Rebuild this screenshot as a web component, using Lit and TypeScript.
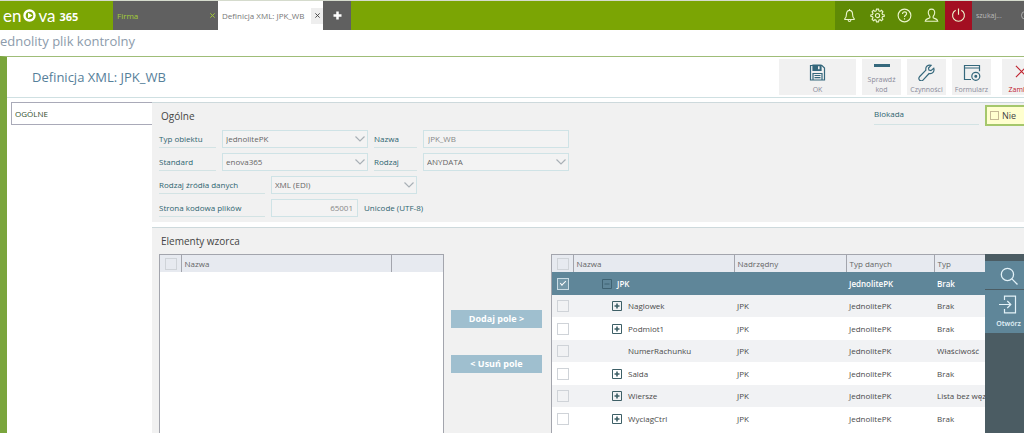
import { LitElement, html, css, svg, nothing } from "lit";
import { customElement } from "lit/decorators.js";
import { classMap } from "lit/directives/class-map.js";

interface Item {
  name: string;
  parent: string;
  data: string;
  type: string;
  mark: "" | "plus" | "minus";
}

const ITEMS: Item[] = [
  { name: "JPK", parent: "", data: "JednolitePK", type: "Brak", mark: "minus" },
  { name: "Naglowek", parent: "JPK", data: "JednolitePK", type: "Brak", mark: "plus" },
  { name: "Podmiot1", parent: "JPK", data: "JednolitePK", type: "Brak", mark: "plus" },
  { name: "NumerRachunku", parent: "JPK", data: "JednolitePK", type: "Właściwość", mark: "" },
  { name: "Salda", parent: "JPK", data: "JednolitePK", type: "Brak", mark: "plus" },
  { name: "Wiersze", parent: "JPK", data: "JednolitePK", type: "Lista bez węzła", mark: "plus" },
  { name: "WyciagCtrl", parent: "JPK", data: "JednolitePK", type: "Brak", mark: "plus" },
];

const icon = (cls: string, box: string, body: unknown) =>
  html`<svg class="icon ${cls}" viewBox=${box} aria-hidden="true">${body}</svg>`;

const bell = svg`<path d="M3 11.5c1.3-1 1.7-2.300 1.700-4.500 0-2.800 1.100-4.500 3.300-4.500s3.300 1.700 3.300 4.500c0 2.200.4 3.500 1.700 4.500v.8H3zM6.500 12.500c0 2.500 3 2.500 3 0M8 2.500V1"/>`;
const gear = svg`<path d="M6.900 1.200h2.200l.4 1.900 1.200.5 1.600-1.100 1.500 1.600-1 1.600.5 1.200 1.900.4v1.500l-1.900.4-.5 1.200 1 1.600-1.500 1.600-1.600-1.100-1.200.5-.4 1.800H6.900l-.4-1.800-1.200-.5-1.600 1.100L2.200 12l1-1.600-.5-1.200L.9 8.800V7.300l1.800-.4.5-1.200-1-1.600 1.500-1.600 1.600 1.100 1.200-.5z"/><circle cx="8" cy="8" r="2.200"/>`;
const help = svg`<circle cx="8" cy="8" r="6.800"/><path d="M5.900 6.300c0-2.900 4.300-2.700 4.300-.2 0 1.600-2.200 1.600-2.200 3.500M8 10.900v1.300"/>`;
const user = svg`<path d="M8 1.200c2.600 0 3.600 1.800 3.400 4.200-.2 1.800-.9 2.700-1.600 3.500v1.600c1 .8 4.500.8 4.900 3.600H1.300c.4-2.800 3.900-2.800 4.900-3.600V8.900c-.7-.8-1.400-1.700-1.600-3.500C4.400 3 5.400 1.200 8 1.200z"/>`;
const power = svg`<path d="M5 2.300a6.300 6.300 0 1 0 6 0M8 .6v6.600"/>`;
const lens = svg`<circle cx="8" cy="8" r="5.800"/><path d="M12.200 12.200L17.500 17.500"/>`;
const save = svg`<path d="M1.500 1.500h11.500l2.500 2.500v12h-14z"/><path class="fill" d="M4 1h8v5.500H4z"/><path class="gap" d="M9 2.200h1.600v3H9z"/><path d="M4 16V9.500h9V16M5.500 11.500h6M5.500 13.700h6"/>`;
const wrench = svg`<path d="M15.800 4.300l-2.900 2.300-2-.6-.4-2 2.600-2.700c-3-.9-6 1.300-5.200 4.800L1.700 12.500c-1.400 1.500-.9 3 0 3.700.9.800 2.400.8 3.500-.4l5.900-6.300c3.400.7 5.600-2 4.700-5.200zM3.600 14.200h.1"/>`;
const form = svg`<path d="M8 15.500H1.500v-14h15v5.700M1.500 4h15"/><circle cx="12.800" cy="12.300" r="4"/><circle class="fill" cx="12.800" cy="12.300" r=".9"/>`;
const close = svg`<path d="M1 1l12 12M13 1L1 13"/>`;
const enter = svg`<path d="M5.500 5V1.200h11v16.600h-11V14M0 9.500h11.500M8.300 6l3.500 3.500L8.300 13"/>`;

@customElement("app-root")
export class AppRoot extends LitElement {
  static styles = css`
    :host {
      display: flex;
      flex-direction: column;
      min-height: 100vh;
      overflow: hidden;
      background: #fff;
      color: #555;
      font: 8px/12px "Open Sans", "Noto Sans", sans-serif;
    }
    *, *::before, *::after { box-sizing: border-box; }
    button, input, select { font: inherit; color: inherit; border-radius: 0; margin: 0; }
    button { border: 0; padding: 0; background: none; }
    h1, h2, h3 { margin: 0; font-weight: 400; }
    .icon { display: block; fill: none; stroke: currentColor; stroke-width: 1.2; }
    .icon .fill { fill: currentColor; }
    .icon .gap { fill: #f1f1f1; stroke: none; }

    .topbar { display: flex; height: 30px; border-top: 1px solid #d5dbcd; background: #7ba504; }
    .logo { display: flex; align-items: center; width: 113px; padding-left: 3px; color: #fff; text-decoration: none; font: 17px/28px Lato, sans-serif; }
    .logo svg { width: 13px; height: 13px; margin: 0 2px; }
    .logo b { font: 700 11px/28px "Open Sans", sans-serif; margin: 2px 0 0 4px; }
    .tab { display: flex; align-items: center; width: 105px; background: #606060; color: #a4cf35; }
    .tab a { flex: 1; padding-left: 4px; color: inherit; text-decoration: none; white-space: nowrap; }
    .tab button { width: 12px; height: 16px; }
    .tab.active { background: #fff; color: #777; }
    .tab.active button { background: #eee; color: #444; }
    .x { width: 5px; height: 5px; margin: auto; }
    .plus { width: 28px; background: #606060; color: #fff; }
    .plus svg { width: 9px; height: 9px; margin: auto; stroke-width: 2.500; }
    .tools { display: flex; margin-left: auto; background: #5f8a05; color: #eaf5cc; }
    .tools button { width: 27px; }
    .tools button:first-child { width: 29px; }
    .tools .off { background: #a30f22; }
    .tools svg { width: 15px; height: 15px; margin: auto; }
    .search { display: flex; align-items: center; width: 52px; padding-left: 4px; background: #606060; color: #bbb; font-size: 7px; overflow: hidden; }
    .search input { flex: none; width: 44px; border: 0; padding: 0; background: none; }
    .search input::placeholder { color: #bbb; opacity: 1; }
    .search svg { flex: none; width: 12px; height: 12px; }

    .context { height: 26px; font-size: 13px; line-height: 23px; color: #8c9bab; }
    .frame { flex: 1; display: flex; flex-direction: column; border-top: 1px solid #9fbd78; border-left: 7px solid #7aa53c; }
    .head { display: flex; align-items: center; height: 41px; padding-left: 25px; border-bottom: 1px solid #cfe0e2; }
    .head h2 { flex: 1; font-size: 13px; line-height: 18px; color: #56809a; }
    .actions { display: flex; gap: 6px; margin-right: -17px; }
    .actions button { display: flex; flex-direction: column; align-items: center; justify-content: space-between; width: 39px; height: 36px; padding-top: 5px; background: #f1f1f1; color: #8a8a9a; font-size: 7px; line-height: 10px; }
    .actions svg { color: #35687c; }
    .actions .wide { width: 77px; }
    .actions .last { margin-left: 5px; color: #c0202c; }
    .actions .last svg { width: 13px; height: 13px; margin-top: 1px; color: #c0202c; }
    .i17 { width: 17px; height: 17px; }
    .i18 { width: 18px; height: 18px; }
    .bar { width: 16px; height: 3px; background: #35687c; }

    .work { flex: 1; display: flex; padding: 4px 0 0 4px; }
    .side { width: 141px; }
    .side a { display: block; height: 23px; padding-left: 3px; border: 1px solid #a9aab8; border-right: 0; line-height: 21px; color: #34502c; text-decoration: none; }
    .main { flex: 1; min-width: 0; display: flex; flex-direction: column; gap: 5px; }
    .panel { border-top: 1px solid #cdd9dc; background: #f1f1f1; }
    .panel h3 { padding-left: 9px; font-size: 10px; line-height: 16px; color: #444; }
    .general { display: flex; justify-content: space-between; height: 120px; padding: 5px 0 0 7px; }
    .panel .form h3 { padding-left: 2px; margin-bottom: 1px; }
    .form { display: flex; flex-direction: column; gap: 5px; }
    .line { display: flex; gap: 6px; height: 18px; }
    .lab { width: 57px; border-bottom: 1px solid #d3e3e4; color: #2e6470; line-height: 17px; white-space: nowrap; }
    .lab.mid { width: 43px; }
    .lab.long { width: 106px; }
    .unit { color: #2e6470; line-height: 18px; }
    .box { width: 146px; height: 18px; border: 1px solid #cfe3e6; padding: 0 3px; background: #f3f3f3; color: #666; }
    input.box { padding: 0 4px 2px; color: #888; }
    .pick { position: relative; display: flex; }
    .pick select { appearance: none; }
    .pick svg { position: absolute; right: 3px; top: 6px; width: 10px; height: 6px; color: #a9b0b6; pointer-events: none; }
    .box.num { width: 87px; text-align: right; }
    .lock { display: flex; gap: 6px; align-items: flex-start; margin-top: -3px; }
    .lock .lab { width: 105px; height: 20px; line-height: 18px; }
    .check { display: flex; align-items: center; gap: 3px; width: 39px; height: 21px; padding-left: 3px; border: 2px solid #a5c76b; border-right: 0; background: #ffffcf; color: #444; font-size: 9px; }
    .tick { appearance: none; display: block; width: 12px; height: 12px; border: 1px solid #cfd3d8; }
    .check .tick { width: 9px; height: 9px; border-color: #c5b995; }
    .tick.on { display: grid; place-items: center; border-color: #c9dbe4; background: #7397a8; }
    .tick.on::before { content: ""; width: 6px; height: 3px; margin-bottom: 2px; border: solid #fff; border-width: 0 0 1px 1px; transform: rotate(-45deg); }

    .elements { flex: 1; display: flex; flex-direction: column; padding-top: 5px; }
    .lists { flex: 1; display: flex; padding: 5px 0 0 7px; }
    .list { border: 1px solid #a3a5ad; border-bottom: 0; background: #fff; }
    .from { width: 285px; }
    .to { flex: 1; min-width: 0; border-right: 0; }
    table { width: 100%; table-layout: fixed; border-collapse: collapse; }
    th { height: 17px; padding: 0 0 0 3px; background: #e7eaf0; border-left: 1px solid #a3a5ad; font-weight: 400; text-align: left; color: #666; }
    td { padding: 0 0 0 3px; height: 22px; white-space: nowrap; overflow: hidden; color: #4a4a4a; }
    tbody tr:nth-child(odd) td { height: 23px; }
    th:first-child { border-left: 0; padding-left: 5px; }
    td:first-child { padding-left: 5px; }
    tbody tr:nth-child(even) { background: #f1f2f4; }
    tbody tr.sel { background: #5f8699; }
    tbody tr.sel td { color: #fff; font-weight: 600; }
    .c-tick { width: 21px; }
    .c-name { width: 161px; }
    .c-parent { width: 112px; }
    .c-data { width: 88px; }
    .c-from { width: 210px; }
    .node { display: flex; align-items: center; gap: 6px; padding-left: 36px; }
    .sel .node { padding-left: 26px; gap: 5px; }
    .node svg { width: 10px; height: 10px; color: #3d5f66; stroke-width: 1; }
    .sel .node svg { color: #3f6272; }
    .blank { width: 10px; }
    .move { display: flex; flex-direction: column; gap: 27px; width: 107px; padding: 56px 9px 0 7px; }
    .move button { height: 18px; background: #9fbfcf; color: #fff; font-size: 9px; font-weight: 700; line-height: 18px; }
    .rail { display: flex; flex-direction: column; gap: 1px; width: 39px; padding-top: 7px; background: #4b5c63; }
    .rail button { display: flex; flex-direction: column; align-items: center; gap: 5px; padding: 5px 0 0 8px; background: #5f8699; color: #e3f2f8; height: 28px; font-size: 7px; line-height: 10px; font-weight: 600; }
    .rail button.tall { height: 43px; }
    .rail svg { width: 19px; height: 19px; }
  `;

  private select(id: string, value: string) {
    return html`<span class="pick"><select class="box" id=${id}><option>${value}</option></select>
      <svg class="icon" viewBox="0 0 10 6" aria-hidden="true"><path d="M.5 .5L5 5L9.500 .5"/></svg></span>`;
  }

  private row(item: Item, index: number) {
    const sel = index === 0;
    const sign = item.mark === "plus"
      ? svg`<path d="M.5 .5h9v9h-9z"/><path stroke-width="1.600" d="M2.500 5h5M5 2.500v5"/>`
      : svg`<path d="M.5 .5h9v9h-9zM2.500 5h5"/>`;
    return html`<tr class=${classMap({ sel })}>
      <td><input class=${classMap({ tick: true, on: sel })} type="checkbox" aria-label=${item.name} .checked=${sel}></td>
      <td><span class="node">${item.mark ? icon("", "0 0 10 10", sign) : html`<span class="blank"></span>`}${item.name}</span></td>
      <td>${item.parent || nothing}</td><td>${item.data}</td><td>${item.type}</td>
    </tr>`;
  }

  render() {
    return html`
      <header class="topbar">
        <a class="logo" href="#"><span>en</span><svg viewBox="0 0 13 13" aria-hidden="true"><circle cx="6.500" cy="6.500" r="5" fill="none" stroke="#fff" stroke-width="2.400"/><path d="M5 3.700l4.500 2.800L5 9.300z" fill="#fff"/></svg><span>va</span><b>365</b></a>
        <div class="tab"><a href="#">Firma</a><button aria-label="Zamknij Firma">${icon("x", "0 0 14 14", svg`<path stroke-width="2.600" d="M1 1l12 12M13 1L1 13"/>`)}</button></div>
        <div class="tab active"><a href="#">Definicja XML: JPK_WB</a><button aria-label="Zamknij definicję">${icon("x", "0 0 14 14", svg`<path stroke-width="2.600" d="M1 1l12 12M13 1L1 13"/>`)}</button></div>
        <button class="plus" aria-label="Nowa karta">${icon("", "0 0 9 9", svg`<path d="M4.500 .5v8M.5 4.500h8"/>`)}</button>
        <div class="tools">
          <button aria-label="Powiadomienia">${icon("", "0 0 16 16", bell)}</button>
          <button aria-label="Ustawienia">${icon("", "0 0 16 16", gear)}</button>
          <button aria-label="Pomoc">${icon("", "0 0 16 16", help)}</button>
          <button aria-label="Konto">${icon("", "0 0 16 16", user)}</button>
          <button class="off" aria-label="Wyloguj">${icon("", "0 0 16 16", power)}</button>
        </div>
        <div class="search"><input aria-label="Szukaj" placeholder="szukaj...">${icon("", "0 0 18 18", lens)}</div>
      </header>
      <h1 class="context">ednolity plik kontrolny</h1>
      <section class="frame">
        <div class="head">
          <h2>Definicja XML: JPK_WB</h2>
          <div class="actions">
            <button class="wide">${icon("i17", "0 0 17 17", save)}OK</button>
            <button><span class="bar"></span><span>Sprawdź<br>kod</span></button>
            <button>${icon("i17", "0 0 17 17", wrench)}Czynności</button>
            <button>${icon("i18", "0 0 18 18", form)}Formularz</button>
            <button class="last">${icon("", "0 0 14 14", close)}Zamknij</button>
          </div>
        </div>
        <div class="work">
          <nav class="side"><a href="#">OGÓLNE</a></nav>
          <main class="main">
            <section class="panel general">
              <div class="form">
                <h3>Ogólne</h3>
                <div class="line"><label class="lab" for="obj">Typ obiektu</label>${this.select("obj", "JednolitePK")}<label class="lab mid" for="name">Nazwa</label><input class="box" id="name" value="JPK_WB"></div>
                <div class="line"><label class="lab" for="std">Standard</label>${this.select("std", "enova365")}<label class="lab mid" for="kind">Rodzaj</label>${this.select("kind", "ANYDATA")}</div>
                <div class="line"><label class="lab long" for="src">Rodzaj źródła danych</label>${this.select("src", "XML (EDI)")}</div>
                <div class="line"><label class="lab long" for="page">Strona kodowa plików</label><input class="box num" id="page" value="65001"><span class="unit">Unicode (UTF-8)</span></div>
              </div>
              <div class="lock"><span class="lab">Blokada</span><span class="check"><input class="tick" type="checkbox" id="lock"><label for="lock">Nie</label></span></div>
            </section>
            <section class="panel elements">
              <h3>Elementy wzorca</h3>
              <div class="lists">
                <div class="list from"><table>
                  <colgroup><col class="c-tick"><col class="c-from"><col></colgroup>
                  <thead><tr><th><input class="tick" type="checkbox" aria-label="Zaznacz wszystkie"></th><th>Nazwa</th><th></th></tr></thead>
                </table></div>
                <div class="move"><button>Dodaj pole &gt;</button><button>&lt; Usuń pole</button></div>
                <div class="list to"><table>
                  <colgroup><col class="c-tick"><col class="c-name"><col class="c-parent"><col class="c-data"><col></colgroup>
                  <thead><tr><th><input class="tick" type="checkbox" aria-label="Zaznacz wszystkie"></th><th>Nazwa</th><th>Nadrzędny</th><th>Typ danych</th><th>Typ</th></tr></thead>
                  <tbody>${ITEMS.map((item, i) => this.row(item, i))}</tbody>
                </table></div>
                <div class="rail">
                  <button aria-label="Szukaj">${icon("", "0 0 18 18", lens)}</button>
                  <button class="tall">${icon("", "0 0 19 19", enter)}Otwórz</button>
                </div>
              </div>
            </section>
          </main>
        </div>
      </section>
    `;
  }
}
